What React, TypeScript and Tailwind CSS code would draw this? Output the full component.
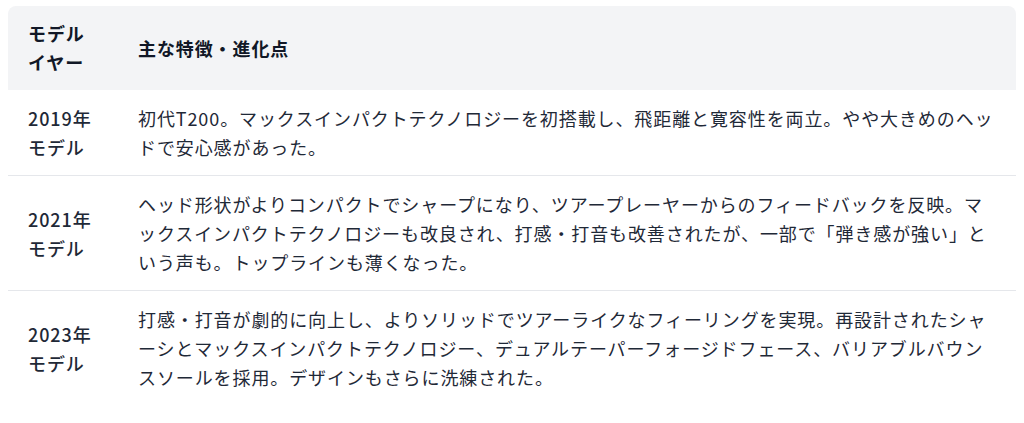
const rows = [
  {
    year: "2019年",
    model: "モデル",
    text: "初代T200。マックスインパクトテクノロジーを初搭載し、飛距離と寛容性を両立。やや大きめのヘッドで安心感があった。",
  },
  {
    year: "2021年",
    model: "モデル",
    text: "ヘッド形状がよりコンパクトでシャープになり、ツアープレーヤーからのフィードバックを反映。マックスインパクトテクノロジーも改良され、打感・打音も改善されたが、一部で「弾き感が強い」という声も。トップラインも薄くなった。",
  },
  {
    year: "2023年",
    model: "モデル",
    text: "打感・打音が劇的に向上し、よりソリッドでツアーライクなフィーリングを実現。再設計されたシャーシとマックスインパクトテクノロジー、デュアルテーパーフォージドフェース、バリアブルバウンスソールを採用。デザインもさらに洗練された。",
  },
];

export default function App() {
  return (
    <div
      className="bg-white px-2 pt-[6px] text-[18px] leading-[29px] tracking-[0.05em] text-[#1f2937]"
      style={{ fontFamily: '"Noto Sans CJK JP", "Noto Sans", sans-serif' }}
    >
      <div className="overflow-hidden rounded-t-lg">
        <table className="w-full border-collapse text-left">
          <thead>
            <tr className="bg-[#f3f4f6]">
              <th className="w-[110px] px-5 py-[13px] align-middle font-bold text-[#111827]">モデルイヤー</th>
              <th className="px-5 py-[13px] align-middle font-bold text-[#111827]">主な特徴・進化点</th>
            </tr>
          </thead>
          <tbody>
            {rows.map((r, i) => (
              <tr key={r.year} className={i < rows.length - 1 ? "border-b border-[#e5e7eb]" : ""}>
                <td className="px-5 pt-[14px] pb-[13px] align-middle font-medium">
                  {r.year}
                  <br />
                  {r.model}
                </td>
                <td className="px-5 pt-[14px] pb-[13px] align-middle">{r.text}</td>
              </tr>
            ))}
          </tbody>
        </table>
      </div>
    </div>
  );
}
